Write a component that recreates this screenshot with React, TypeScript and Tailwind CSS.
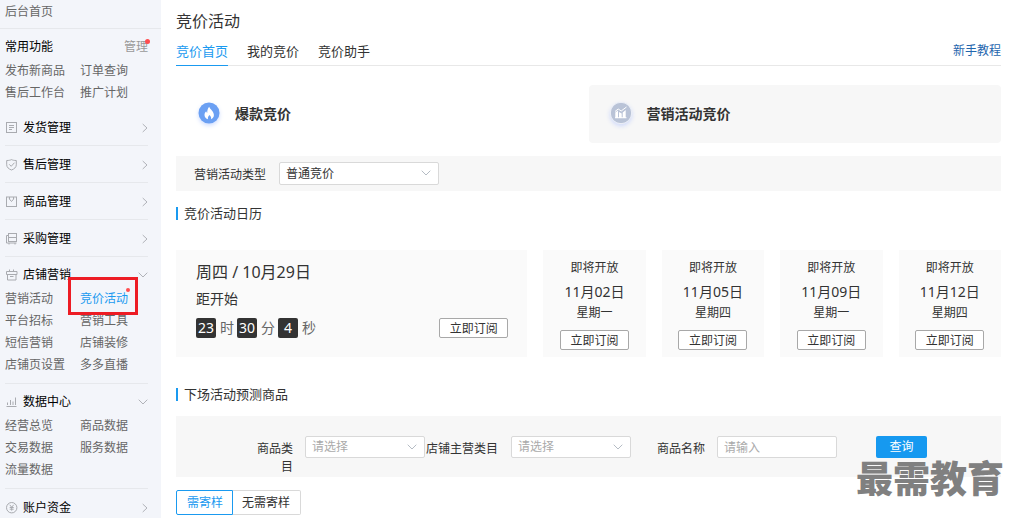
import type { ReactNode } from "react";

type IconName = "doc" | "shield" | "bag" | "cart" | "gift" | "chart" | "coin";

const iconShapes: Record<IconName, ReactNode> = {
  doc: (
    <>
      <rect x=".5" y=".5" width="10" height="10" />
      <path d="M3 3.500h5M3 5.500h5M3 7.500h3" />
    </>
  ),
  shield: (
    <>
      <path d="M.7 1.500C3 1.500 4.200 1.200 5.500.6c1.300.6 2.500.9 4.800.9v4.300c0 2.500-2 4.200-4.800 5.200C2.700 10 .7 8.300.7 5.800z" />
      <path d="M3.200 5.300l2 2 3.300-3.600" />
    </>
  ),
  bag: (
    <>
      <rect x=".5" y="1" width="10" height="9.500" />
      <path d="M3.200 2.800L5.500 5.500l2.300-2.700M3.500 1v2M7.500 1v2" />
    </>
  ),
  cart: (
    <>
      <rect x="2.500" y=".5" width="8" height="8" />
      <path d="M2.500 4.500h8M2.500 2.500h-2v7.500h10M3 10v1.500M9 10v1.500" />
    </>
  ),
  gift: (
    <>
      <path d="M.5 2.500h10.500v3H.5zM1.500 5.500v5.500h8.500V5.500M3.500 2.500V.5M7.500 2.500V.5M4 7.500h3.500" />
    </>
  ),
  chart: <path d="M.5 10.500h10M1.500 9V6.500M4.500 9V4M7 9V5.500M9.500 9V1.500" />,
  coin: (
    <>
      <circle cx="5.700" cy="5.700" r="5.200" />
      <path d="M3.700 2.800l2 2.400 2-2.400M5.700 5.200v3.500M3.700 5.500h4M3.700 7.200h4" />
    </>
  ),
};

function MenuIcon({ name }: { name: IconName }) {
  return (
    <svg className="size-3 shrink-0" viewBox="0 0 12 12" fill="none" stroke="#a9abb0" strokeWidth="1" aria-hidden="true">
      {iconShapes[name]}
    </svg>
  );
}

function Chevron({ dir, className = "" }: { dir: "right" | "down"; className?: string }) {
  return dir === "right" ? (
    <svg className={`h-[10px] w-[6px] ${className}`} viewBox="0 0 6 10" fill="none" stroke="currentColor" aria-hidden="true">
      <path d="M.7 1l4.300 4-4.300 4" />
    </svg>
  ) : (
    <svg className={`h-[6px] w-[10px] ${className}`} viewBox="0 0 10 6" fill="none" stroke="currentColor" aria-hidden="true">
      <path d="M.7.7L5 5 9.300.7" />
    </svg>
  );
}

type Group = { icon: IconName; label: string; items?: string[] };

const groups: Group[] = [
  { icon: "doc", label: "发货管理" },
  { icon: "shield", label: "售后管理" },
  { icon: "bag", label: "商品管理" },
  { icon: "cart", label: "采购管理" },
  {
    icon: "gift",
    label: "店铺营销",
    items: ["营销活动", "竞价活动", "平台招标", "营销工具", "短信营销", "店铺装修", "店铺页设置", "多多直播"],
  },
  {
    icon: "chart",
    label: "数据中心",
    items: ["经营总览", "商品数据", "交易数据", "服务数据", "流量数据"],
  },
  { icon: "coin", label: "账户资金" },
];

function LinkGrid({ items }: { items: string[] }) {
  return (
    <ul className="grid grid-cols-[75px_1fr] leading-[22px] text-[#666]">
      {items.map((item) =>
        item === "竞价活动" ? (
          <li key={item} className="relative text-[#1a9af0]">
            <a href="#">{item}</a>
            <span className="absolute top-0 left-[46px] size-1 rounded-full bg-[#ff4d4f]" />
            <span className="pointer-events-none absolute -top-[11px] -left-3 z-10 h-[38px] w-[70px] border-3 border-[#ed1c24]" />
          </li>
        ) : (
          <li key={item} className="whitespace-nowrap">
            <a href="#">{item}</a>
          </li>
        ),
      )}
    </ul>
  );
}

function Sidebar() {
  return (
    <nav className="w-[161px] shrink-0 bg-[#f3f5fa]">
      <div className="border-b border-[#e6e8ec] pt-[3px] pb-[7px] pl-[5px] leading-[18px] text-[#666]">
        <a href="#">后台首页</a>
      </div>
      <div className="pr-[13px] pl-[5px]">
        <div className="pt-[7px] pb-[5px]">
          <div className="mb-[2px] flex justify-between leading-[22px]">
            <span className="text-black">常用功能</span>
            <a href="#" className="relative text-[#999]">
              管理
              <span className="absolute top-[3px] -right-[2px] size-[5px] rounded-full bg-[#ff4d4f]" />
            </a>
          </div>
          <LinkGrid items={["发布新商品", "订单查询", "售后工作台", "推广计划"]} />
        </div>
        {groups.map(({ icon, label, items }) => (
          <section key={label} className={`border-b border-[#e6e8ec] last:border-0 ${items ? "pb-[7px]" : ""}`}>
            <button
              type="button"
              className={`flex w-full items-center pl-[1px] leading-[18px] ${items ? "pt-[9px] pb-1" : label === "账户资金" ? "pt-[10px]" : "pt-[10px] pb-2"}`}
            >
              <MenuIcon name={icon} />
              <span className="ml-[5px] text-black">{label}</span>
              <Chevron dir={items ? "down" : "right"} className="ml-auto text-[#b0b2b8]" />
            </button>
            {items && <LinkGrid items={items} />}
          </section>
        ))}
      </div>
    </nav>
  );
}

function Dropdown({ id, value, size }: { id: string; value: string; size: "wide" | "narrow" }) {
  return (
    <div className={`relative shrink-0 ${size === "wide" ? "h-[23px] w-40 text-[#333]" : "h-[22px] w-[120px] text-[#aaa]"}`}>
      <select id={id} className="h-full w-full appearance-none rounded-xs border border-[#d9d9d9] bg-white pl-[6px]">
        <option>{value}</option>
      </select>
      <Chevron dir="down" className="pointer-events-none absolute top-2 right-2 text-[#b5bcc4]" />
    </div>
  );
}

function SubscribeButton() {
  return (
    <button type="button" className="h-5 w-[69px] rounded-xs border border-[#a8a8a8] bg-white pt-px leading-[18px]">
      立即订阅
    </button>
  );
}

function SectionTitle({ children }: { children: ReactNode }) {
  return <h2 className="border-l-2 border-[#1a9af0] pl-[6px] text-[13px] leading-[13px]">{children}</h2>;
}

function TimeBox({ value, unit }: { value: string; unit: string }) {
  return (
    <>
      <span className="w-5 rounded-xs bg-[#333] text-center text-white">{value}</span>
      <span className="mr-[3px] ml-1 text-[#666]">{unit}</span>
    </>
  );
}

const upcoming = [
  { date: "11月02日", day: "星期一" },
  { date: "11月05日", day: "星期四" },
  { date: "11月09日", day: "星期一" },
  { date: "11月12日", day: "星期四" },
];

export default function App() {
  return (
    <div className="flex min-h-screen bg-white font-['Noto_Sans','Noto_Sans_CJK_SC',sans-serif] text-xs text-[#333]">
      <Sidebar />
      <main className="relative min-w-0 flex-1 pr-2 pl-[15px]">
        <h1 className="pt-[9px] text-base leading-6">竞价活动</h1>
        <div className="flex items-end justify-between border-b border-[#e8e8e8] pt-[7px]">
          <div className="-mb-px flex gap-[19px] text-[13px] leading-[22px]">
            <a href="#" className="border-b border-[#1a9af0] pb-[3px] text-[#1a9af0]">
              竞价首页
            </a>
            <a href="#">我的竞价</a>
            <a href="#">竞价助手</a>
          </div>
          <a href="#" className="pb-[3px] leading-[22px] text-[#1f66ae]">
            新手教程
          </a>
        </div>

        <div className="mt-[19px] grid grid-cols-2 text-sm font-bold">
          <button type="button" className="flex h-[58px] items-center gap-[15px] pl-[22px]">
            <svg className="size-[22px] overflow-visible drop-shadow-[0_2px_2px_#cddcff]" viewBox="0 0 22 22" aria-hidden="true">
              <circle cx="11" cy="10" r="10.500" fill="#6ba0f3" />
              <path
                d="M11.200 3.800c.4 2.100 4.700 4.700 4.700 8.200 0 2-1.100 3.500-2.900 4.200.5-1.600-.2-3-1.500-4.200-1.300 1.200-2 2.600-1.500 4.200-1.900-.7-3.500-2.200-3.500-4.300 0-1.600.8-2.700 1.700-3.600.2.900.5 1.300 1 1.600.1-2.400.5-4.800 2-6.100z"
                fill="#fff"
              />
            </svg>
            爆款竞价
          </button>
          <button type="button" className="flex h-[58px] items-center gap-[15px] rounded-sm bg-[#f7f7f7] pl-[21px]">
            <svg className="size-[22px] overflow-visible drop-shadow-[0_2px_2px_#cfd9fa]" viewBox="0 0 22 22" aria-hidden="true">
              <circle cx="11" cy="10" r="10.700" fill="#b9c3d7" stroke="#eef1f8" strokeWidth="1" />
              <path d="M5.300 9.500l2.700-2v7.500H5.300zM9 9l2.700 1.500V15H9zM12.700 9.500l3-2.500v8h-3zM5 14.300h11.500v1H5z" fill="#fff" />
              <path d="M5 8.500l3.200-2.500 3 2L16.500 4" fill="none" stroke="#fff" />
            </svg>
            营销活动竞价
          </button>
        </div>

        <div className="mt-[13px] flex h-[35px] items-center gap-[13px] bg-[#f7f7f7] pl-[18px]">
          <label htmlFor="type" className="pt-[2px]">
            营销活动类型
          </label>
          <Dropdown id="type" value="普通竞价" size="wide" />
        </div>

        <div className="mt-4">
          <SectionTitle>竞价活动日历</SectionTitle>
        </div>

        <div className="mt-[30px] grid grid-cols-[24fr_7fr_7fr_7fr_7fr] gap-4">
          <section className="h-[107px] bg-[#fafafa] pt-[10px] pr-[19px] pl-5">
            <div className="text-base leading-6">周四 / 10月29日</div>
            <div className="mt-[5px] text-sm leading-5">距开始</div>
            <div className="mt-[9px] flex items-center justify-between">
              <div className="flex text-sm leading-5">
                <TimeBox value="23" unit="时" />
                <TimeBox value="30" unit="分" />
                <TimeBox value="4" unit="秒" />
              </div>
              <SubscribeButton />
            </div>
          </section>
          {upcoming.map(({ date, day }) => (
            <section key={date} className="flex flex-col items-center bg-[#fafafa] pt-[9px]">
              <div className="leading-[18px]">即将开放</div>
              <div className="mt-[5px] text-sm leading-5">{date}</div>
              <div className="mt-[2px] mb-2 leading-[18px]">{day}</div>
              <SubscribeButton />
            </section>
          ))}
        </div>

        <div className="mt-[31px]">
          <SectionTitle>下场活动预测商品</SectionTitle>
        </div>

        <form className="mt-[15px] flex h-[61px] items-start bg-[#f7f7f7] pt-5 pl-[77px] leading-[18px]">
          <label htmlFor="category" className="mt-1 mr-3 w-10 shrink-0 text-right">
            商品类目
          </label>
          <Dropdown id="category" value="请选择" size="narrow" />
          <label htmlFor="main-category" className="mt-1 mr-[13px] ml-[1px] shrink-0">
            店铺主营类目
          </label>
          <Dropdown id="main-category" value="请选择" size="narrow" />
          <label htmlFor="name" className="mt-1 mr-3 ml-[26px] shrink-0">
            商品名称
          </label>
          <input
            id="name"
            placeholder="请输入"
            className="h-[22px] w-[120px] rounded-xs border border-[#d9d9d9] bg-white px-[6px] placeholder:text-[#aaa]"
          />
          <button type="button" className="ml-[39px] h-[22px] w-[51px] shrink-0 rounded-xs bg-[#1699f0] text-white">
            查询
          </button>
        </form>

        <div className="mt-[13px] flex leading-[23px]">
          <button type="button" className="rounded-l-xs border border-[#1a9af0] pr-[9px] pl-[10px] text-[#1a9af0]">
            需寄样
          </button>
          <button type="button" className="rounded-r-xs border border-l-0 border-[#d9d9d9] pr-[10px] pl-[9px]">
            无需寄样
          </button>
        </div>

        <div className="pointer-events-none absolute top-[457px] right-[5px] text-[37px] leading-[44px] font-black text-[#808080]">
          最需教育
        </div>
      </main>
    </div>
  );
}
